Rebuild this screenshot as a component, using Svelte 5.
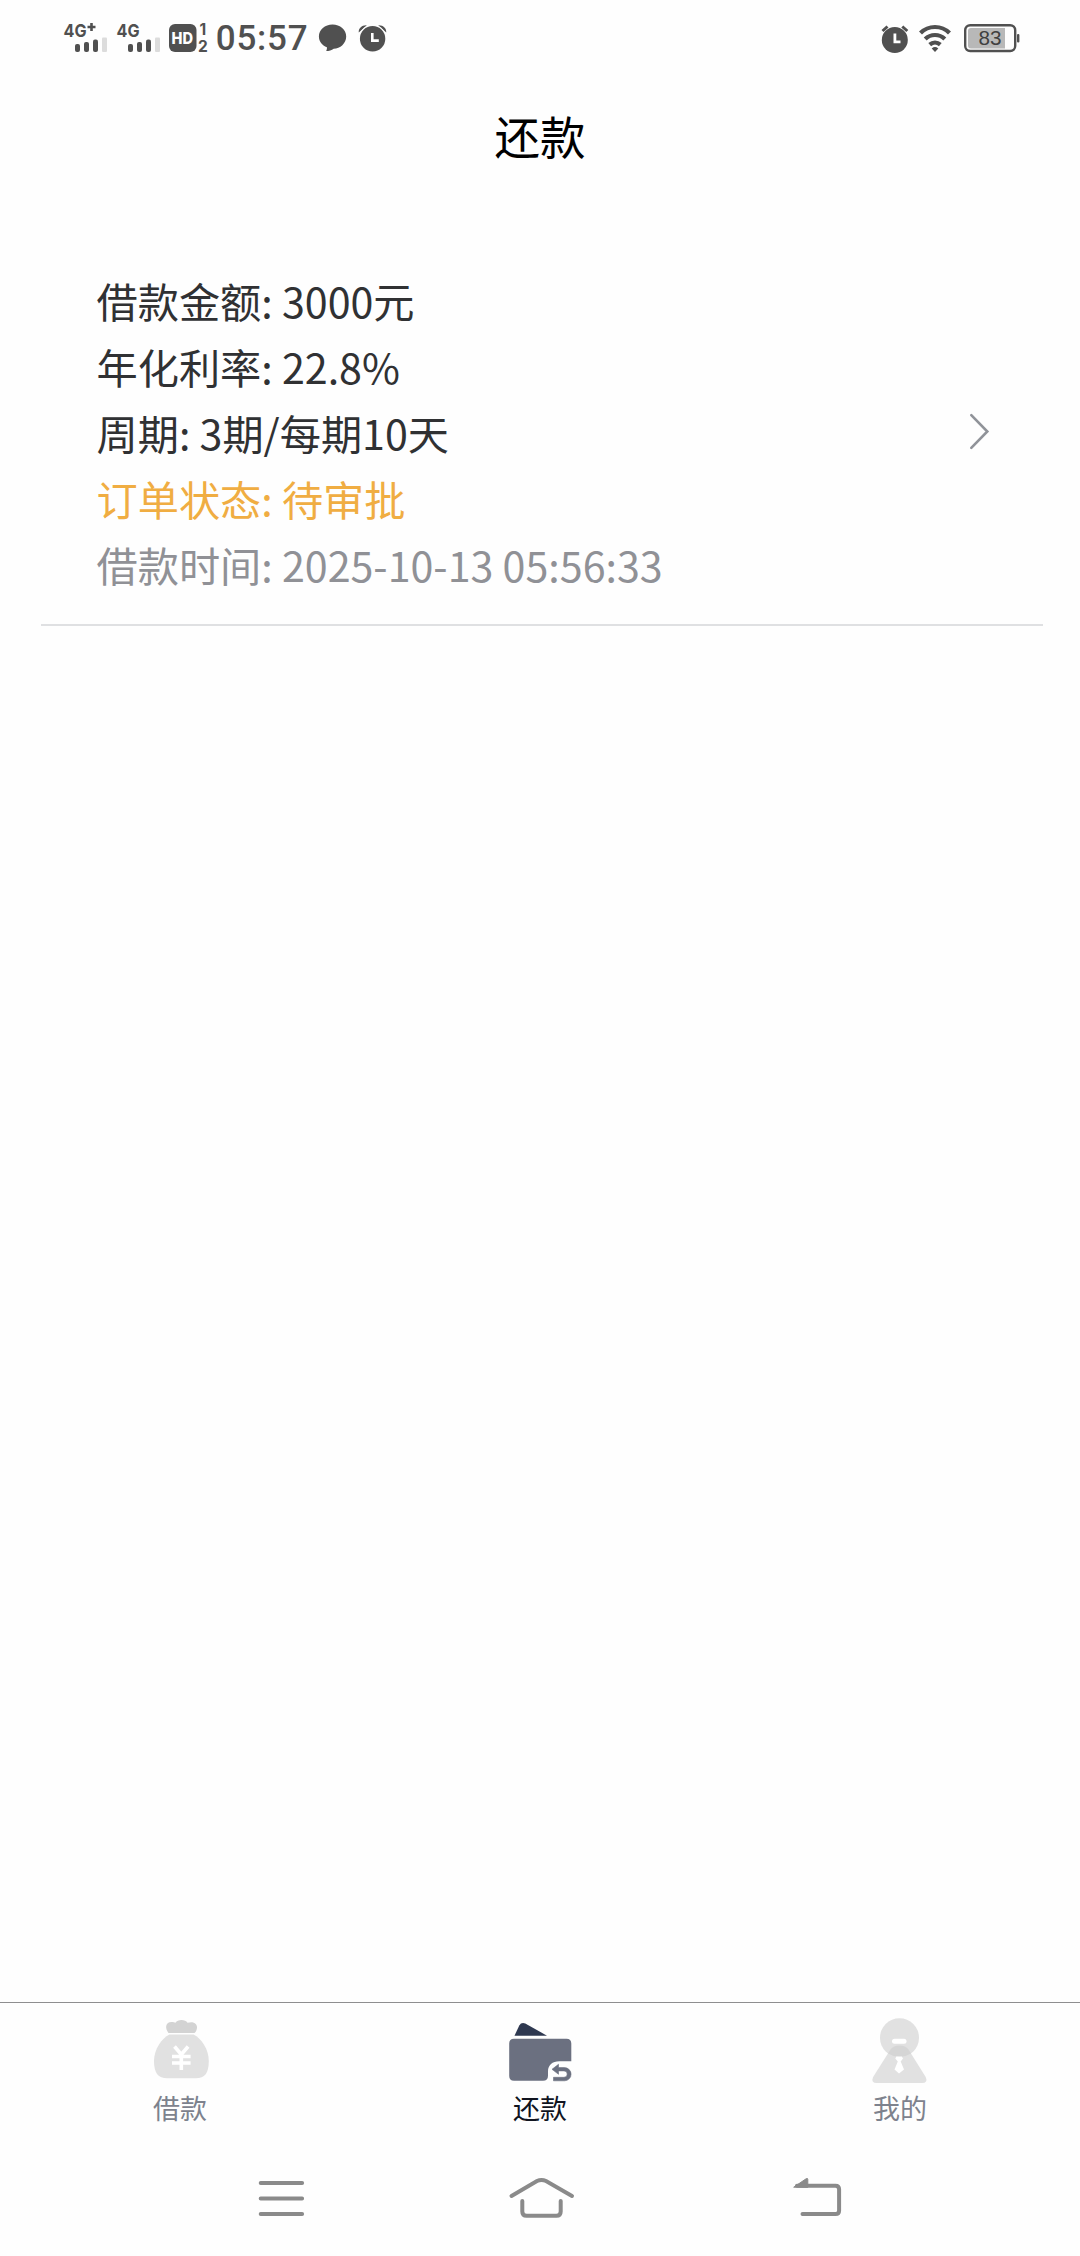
<script lang="ts">
  type Row = { label: string; value: string; tone: string };

  const rows: Row[] = [
    { label: '借款金额', value: '3000元', tone: 'normal' },
    { label: '年化利率', value: '22.8%', tone: 'normal' },
    { label: '周期', value: '3期/每期10天', tone: 'normal' },
    { label: '订单状态', value: '待审批', tone: 'pending' },
    { label: '借款时间', value: '2025-10-13 05:56:33', tone: 'muted' },
  ];

  const tabs = [
    { id: 'loan', label: '借款' },
    { id: 'repay', label: '还款' },
    { id: 'mine', label: '我的' },
  ];
  let active = $state('repay');
</script>

{#snippet bars()}
  <rect x="75" y="44" width="5" height="8" rx="2" />
  <rect x="84" y="42" width="5" height="10" rx="2" />
  <rect x="93" y="39.5" width="5" height="12.5" rx="2" />
  <rect x="102" y="37.5" width="5" height="14.5" rx="1" fill="#dcdcdc" />
{/snippet}

<div class="screen">
  <header class="status">
    <div class="side">
      <svg width="53" height="40" viewBox="60 18 53 40">
        <text class="net" x="63.5" y="36.5" textLength="23" lengthAdjust="spacingAndGlyphs">4G</text>
        <path d="M87.500 27h8M91.500 23v8" stroke="#505050" stroke-width="2.600" />
        {@render bars()}
      </svg>
      <svg width="53" height="40" viewBox="60 18 53 40">
        <text class="net" x="63.5" y="36.5" textLength="23" lengthAdjust="spacingAndGlyphs">4G</text>
        {@render bars()}
      </svg>
      <svg width="46" height="40" viewBox="166 18 46 40">
        <rect x="169" y="24" width="27.5" height="28" rx="6" />
        <text class="hd" x="171.5" y="44" textLength="21.5" lengthAdjust="spacingAndGlyphs">HD</text>
        <text class="sim" x="199.5" y="35.300">1</text>
        <text class="sim" x="198" y="51.500">2</text>
      </svg>
      <svg width="100" height="40" viewBox="212 18 100 40">
        <text class="clock" x="215.700" y="50.300" textLength="92">05:57</text>
      </svg>
      <svg width="40" height="40" viewBox="312 18 40 40">
        <path d="M332.500 24.500c7.700 0 13.700 5.200 13.700 12s-6 12.200-12.500 12.200c-2 1.400-4.700 2.300-7.500 2.300 .7-1.300 .8-2.500 .7-3.700-4.900-2-8-6-8-10.800 0-6.800 6-12 13.600-12z" />
      </svg>
      <svg width="40" height="40" viewBox="352 18 40 40">
        <path d="M358.800 32.500c-.6-3.800 3.200-7.600 8-7.200zM386.200 32.500c.6-3.800-3.200-7.600-8-7.200z" />
        <circle cx="372.600" cy="39" r="14" fill="#fdfdfd" />
        <circle cx="372.600" cy="38.800" r="12.700" />
        <path d="M372.300 33v7.600h6.500" fill="none" stroke="#fff" stroke-width="2.600" />
      </svg>
    </div>
    <div class="side">
      <svg width="39" height="40" viewBox="875 18 39 40">
        <circle cx="894.800" cy="40" r="13" />
        <path d="M882.500 31l5-4.500M907.300 31l-5-4.500" stroke="#505050" stroke-width="3" />
        <path d="M894.900 33.500v8.300h5.600" fill="none" stroke="#fff" stroke-width="2.800" />
      </svg>
      <svg width="42" height="40" viewBox="914 18 42 40">
        <g fill="none" stroke="#505050" stroke-width="4.200">
          <path d="M920.500 33a20.500 20.500 0 0 1 29 0" />
          <path d="M925.200 39a14 14 0 0 1 19.600 0" />
          <path d="M929.700 44.600a8 8 0 0 1 10.600 0" />
        </g>
        <path d="M935 52l-3.300-3.600q3.300-2.700 6.600 0z" />
      </svg>
      <svg width="66" height="40" viewBox="956 18 66 40">
        <rect x="965.200" y="25.200" width="50" height="25.800" rx="5" fill="#fdfdfd" stroke="#505050" stroke-width="2.400" />
        <path d="M971 28h34v20.400h-34q-3 0-3-3v-14.400q0-3 3-3z" fill="#b8b8b8" />
        <rect x="1017" y="34" width="2.400" height="8.500" rx="1" />
        <text class="level" x="978.500" y="45" textLength="23" lengthAdjust="spacingAndGlyphs">83</text>
      </svg>
    </div>
  </header>

  <h1>还款</h1>

  <main>
    <article class="order">
      <div class="details">
        {#each rows as row}
          <p class={row.tone}>{row.label}: {row.value}</p>
        {/each}
      </div>
      <svg class="chevron" width="24" height="40" viewBox="967 412 24 40">
        <path d="M971.300 415.200l16 16.300-16 16.300" fill="none" stroke="#909399" stroke-width="2.600" stroke-linecap="round" />
      </svg>
    </article>
  </main>

  <nav class="tabs">
    {#each tabs as tab}
      <button class:active={active === tab.id} onclick={() => (active = tab.id)}>
        {#if tab.id === 'loan'}
          <svg width="76" height="72" viewBox="142.500 2014 76 72">
            <path d="M169 2033c-4-5-3-11 3-11 2 0 3 .5 4 .8 2-3.800 10-3.800 12 0 6-2 10 1 9.500 5-.2 2-1 4-2.500 5.200z" fill="#d3d3d3" />
            <path d="M170 2034.500h24c8 4 15.300 15 15.300 26.500 0 12-4 17.300-13 17.300h-28.600c-9 0-13.200-5.300-13.200-17.300 0-11.500 7.500-22.500 15.500-26.500z" fill="#e1e1e1" />
            <path d="M175 2046.500l6.800 8 6.800-8M181.800 2054.500v15.500M172.500 2056.500h18.600M172.500 2063h18.600" fill="none" stroke="#fff" stroke-width="3.600" />
          </svg>
        {:else if tab.id === 'repay'}
          <svg width="76" height="72" viewBox="502 2014 76 72">
            <path d="M514.500 2035.700l4.800-10.200q2-3.500 6-2l21.700 12.200z" fill="#2e3850" />
            <path d="M514 2038.800h52.500q4.800 0 4.800 4.800v17.700h-12c-7 0-11.300 4-11.300 10v4.500q0 5-5 5h-29q-4.800 0-4.800-4.800v-32.400q0-4.800 4.800-4.800z" fill="#6b7080" />
            <path d="M552 2069.300l6.500-5v3.300h6a6.600 6.600 0 0 1 0 13.200h-11v-3.500h10.500a3.200 3.200 0 0 0 0-6.400h-5.500v3.400z" fill="#6b7080" stroke="#6b7080" stroke-width=".6" stroke-linejoin="round" />
          </svg>
        {:else}
          <svg width="76" height="72" viewBox="862 2014 76 72">
            <circle cx="899.500" cy="2037.700" r="19.500" fill="#e1e1e1" />
            <path d="M890.500 2049.500q3-4 9-4t9 4l17.200 27.500q2.500 6-3.700 6h-45.200q-6.200 0-3.700-6z" fill="#e1e1e1" />
            <path d="M890.500 2049.500q3-4 9-4t9 4l2.500 4.100q-11.500 7-23 0z" fill="#d5d5d5" />
            <rect x="892" y="2038.800" width="14.500" height="5" rx="2.500" fill="#fff" />
            <path d="M896.300 2056.500h5.500l1.200 2-2.300 3 3.300 8-5 4-4.500-4 3.300-8-2.500-3z" fill="#fff" />
          </svg>
        {/if}
        <span>{tab.label}</span>
      </button>
    {/each}
  </nav>

  <footer class="system">
    <svg width="50" height="46" viewBox="256 2175 50 46">
      <path d="M260.700 2183h41.400M260.700 2198.500h41.400M260.700 2214h41.400" />
    </svg>
    <svg class="home" width="70" height="46" viewBox="507 2175 70 46">
      <path d="M511.500 2196l25.500-15q4.500-2.200 9 0l26 15M522.300 2201v10.500q0 4.300 4.300 4.300h29.800q4.300 0 4.300-4.300v-10.500" />
    </svg>
    <svg width="56" height="46" viewBox="790 2175 56 46">
      <path d="M797 2185.700h38.500q3.600 0 3.600 3.600v21.200q0 3.600-3.600 3.600h-33" />
      <path class="tip" d="M794 2187l12.500-8.500q1.300-.5 1.300 1v7.500z" />
    </svg>
  </footer>
</div>

<style>
  :global(body) {
    margin: 0;
    background: #fefefe;
  }
  .screen {
    display: flex;
    flex-direction: column;
    height: 2256px;
    font-family: 'Noto Sans CJK SC', sans-serif;
    background: #fefefe;
  }
  svg {
    display: block;
    flex: none;
  }
  .status {
    display: flex;
    justify-content: space-between;
    box-sizing: border-box;
    height: 76px;
    padding: 18px 58px 18px 60px;
  }
  .side {
    display: flex;
  }
  .status svg {
    fill: #505050;
  }
  .net {
    font: 700 18px Inter, sans-serif;
  }
  .hd {
    font: 800 16px Inter, sans-serif;
    fill: #fff;
  }
  .sim {
    font: 700 15.5px Inter, sans-serif;
  }
  .clock {
    font: 500 35px Roboto, sans-serif;
  }
  .level {
    font: 400 20px 'Liberation Sans', sans-serif;
    fill: #404040;
  }
  h1 {
    margin: 0;
    height: 124px;
    line-height: 118px;
    text-align: center;
    font-size: 45.5px;
    font-weight: 400;
    color: #000;
  }
  main {
    flex: 1;
    padding: 40px 37px 0 41px;
  }
  .order {
    display: flex;
    align-items: center;
    justify-content: space-between;
    padding: 27px 52px 27px 55.5px;
    border-bottom: 2px solid #dfe0e2;
  }
  .details p {
    margin: 0;
    font-size: 41.2px;
    line-height: 66px;
    white-space: nowrap;
  }
  .normal {
    color: #303133;
  }
  .pending {
    color: #f0ad42;
  }
  .muted {
    color: #909196;
  }
  .tabs {
    display: grid;
    grid-template-columns: repeat(3, 1fr);
    box-sizing: border-box;
    height: 146px;
    padding-top: 1px;
    border-top: 1px solid #8e8e8f;
  }
  .tabs button {
    display: flex;
    flex-direction: column;
    align-items: center;
    padding: 10px 0 0;
    border: 0;
    background: none;
    font: 400 27px 'Noto Sans CJK SC', sans-serif;
    color: #7d828d;
  }
  .tabs .active {
    color: #10141f;
  }
  .tabs span {
    line-height: 40px;
    margin-top: 2px;
  }
  .system {
    display: flex;
    box-sizing: border-box;
    height: 108px;
    padding: 27px 234px 0 256px;
  }
  .system .home {
    margin: 0 213px 0 201px;
  }
  .system path {
    fill: none;
    stroke: #8a8a8a;
    stroke-width: 4;
    stroke-linecap: round;
  }
  .system .tip {
    fill: #8a8a8a;
    stroke-width: 1;
  }
</style>
